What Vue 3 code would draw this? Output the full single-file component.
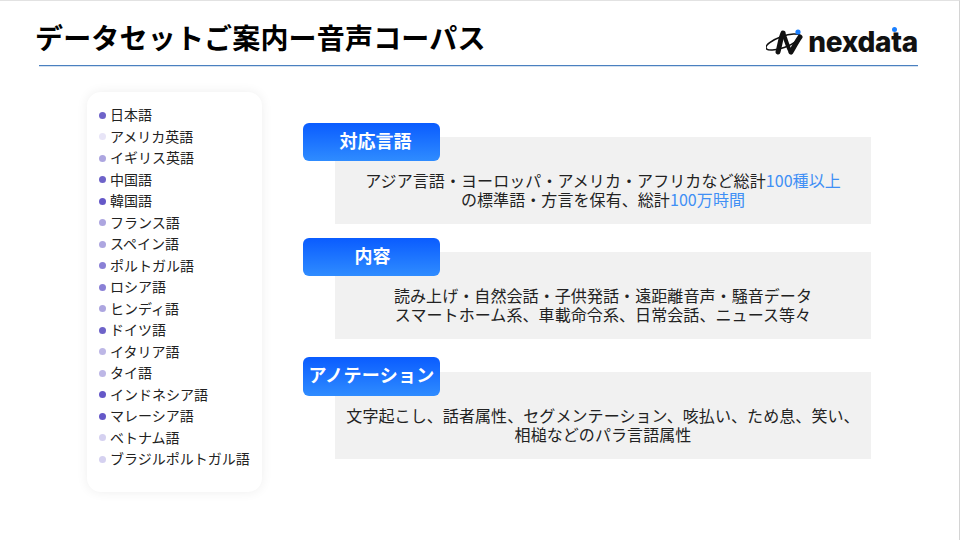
<script setup>
const langs = [
  ['日本語', '#6e63c9'], ['アメリカ英語', '#e8e5f7'], ['イギリス英語', '#ada6e0'],
  ['中国語', '#6e63c9'], ['韓国語', '#6558c8'], ['フランス語', '#ada6e0'],
  ['スペイン語', '#ada6e0'], ['ポルトガル語', '#8a80d6'], ['ロシア語', '#8a80d6'],
  ['ヒンディ語', '#ada6e0'], ['ドイツ語', '#6e63c9'], ['イタリア語', '#bdb7e6'],
  ['タイ語', '#bdb7e6'], ['インドネシア語', '#6558c8'], ['マレーシア語', '#6558c8'],
  ['ベトナム語', '#d5d1f0'], ['ブラジルポルトガル語', '#d5d1f0'],
]
</script>

<template>
  <div class="slide">
    <header class="head">
      <h1 class="title">データセットご案内ー音声コーパス</h1>
      <div class="logo">
        <svg class="mark" width="38" height="26" viewBox="0 0 38 26">
          <ellipse cx="17" cy="13" rx="18" ry="5.5" transform="rotate(-20 17 13)" fill="none" stroke="#111" stroke-width="1.6"/>
          <path d="M12 23 C14 15 15 8 17 4" fill="none" stroke="#111" stroke-width="5" stroke-linecap="round"/>
          <path d="M17 4 C20 10 22 20 25 23" fill="none" stroke="#111" stroke-width="4" stroke-linecap="round"/>
          <path d="M25 23 C28 18 31 12 34 8" fill="none" stroke="#111" stroke-width="5" stroke-linecap="round"/>
          <circle cx="32" cy="3" r="2.6" fill="#1a7fff"/>
        </svg>
        <span class="word">nexdata</span>
        <i class="dot"></i>
      </div>
    </header>
    <main class="body">
      <ul class="card">
        <li v-for="l in langs" :key="l[0]" class="lang">
          <i class="bullet" :style="{ background: l[1] }"></i>{{ l[0] }}
        </li>
      </ul>
      <div class="sections">
        <section class="sec">
          <div class="tag">対応言語</div>
          <p class="box">アジア言語・ヨーロッパ・アメリカ・アフリカなど総計<b>100種以上</b><br>の標準語・方言を保有、総計<b>100万時間</b></p>
        </section>
        <section class="sec">
          <div class="tag">内容</div>
          <p class="box">読み上げ・自然会話・子供発話・遠距離音声・騒音データ<br>スマートホーム系、車載命令系、日常会話、ニュース等々</p>
        </section>
        <section class="sec">
          <div class="tag">アノテーション</div>
          <p class="box">文字起こし、話者属性、セグメンテーション、咳払い、ため息、笑い、<br>相槌などのパラ言語属性</p>
        </section>
      </div>
    </main>
  </div>
</template>

<style>
html, body { margin: 0; background: #fff; }
</style>

<style scoped>
.slide {
  width: 960px;
  height: 540px;
  box-sizing: border-box;
  border-top: 1px solid #e2e2e2;
  border-right: 1px solid #d4d4d4;
  font-family: "Noto Sans CJK JP", "Noto Sans", sans-serif;
  color: #222;
  overflow: hidden;
  background: #fff;
}
.head {
  display: flex;
  justify-content: space-between;
  align-items: flex-end;
  margin: 0 41px 0 39px;
  height: 64px;
  border-bottom: 1px solid #4a80c0;
  box-shadow: 0 1px 0 #d5e1ef;
}
.title {
  margin: 0 0 8px -4px;
  font-size: 28px;
  line-height: 40px;
  letter-spacing: 0.18px;
  font-weight: 700;
  color: #000;
}
.logo {
  position: relative;
  display: flex;
  align-items: center;
  gap: 4px;
  margin-bottom: 10px;
}
.word {
  font-family: Inter, Roboto, sans-serif;
  font-weight: 800;
  font-size: 28px;
  line-height: 26px;
  letter-spacing: -0.3px;
  color: #111;
}
.dot {
  position: absolute;
  right: 21px;
  top: -2px;
  width: 5px;
  height: 5px;
  border-radius: 50%;
  background: #1a7fff;
}
.body {
  display: flex;
  align-items: flex-start;
  padding: 26px 0 0 87px;
}
.card {
  list-style: none;
  margin: 0;
  width: 175px;
  height: 400px;
  box-sizing: border-box;
  padding: 11.6px 0 0 12px;
  border-radius: 14px;
  background: #fff;
  box-shadow: 0 0 12px rgba(0, 0, 0, 0.07);
}
.lang {
  display: flex;
  align-items: center;
  height: 21.5px;
  font-size: 14px;
  color: #222;
  white-space: nowrap;
}
.bullet {
  width: 7px;
  height: 7px;
  border-radius: 50%;
  margin: 2px 4px 0 0;
}
.sections {
  margin: 31px 0 0 41px;
  width: 568px;
  display: flex;
  flex-direction: column;
  gap: 14px;
}
.sec:nth-child(3) { margin-top: 4px; }
.tag {
  position: relative;
  width: 137px;
  height: 38px;
  box-sizing: border-box;
  margin-bottom: -24px;
  border-radius: 6px;
  background: linear-gradient(180deg, #0a5cff, #2f8cff);
  color: #fff;
  font-size: 18px;
  font-weight: 700;
  line-height: 35px;
  text-align: center;
  white-space: nowrap;
}
.sec:nth-child(1) .tag { padding-left: 8px; }
.sec:nth-child(2) .tag { padding-left: 2px; }
.sec:nth-child(3) .tag { height: 39px; letter-spacing: 0.3px; }
.box {
  margin: 0 0 0 32px;
  height: 87px;
  box-sizing: border-box;
  padding-top: 34px;
  background: #f1f1f1;
  font-size: 16px;
  line-height: 19px;
  letter-spacing: 0.08px;
  text-align: center;
  color: #222;
}
.box b {
  font-weight: 400;
  color: #3f8ff5;
}
</style>
